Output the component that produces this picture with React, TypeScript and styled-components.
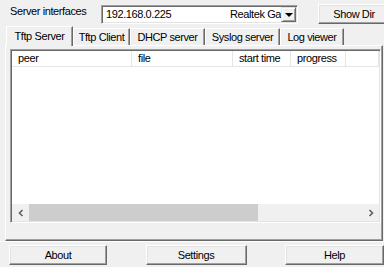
import React from "react";
import styled, { createGlobalStyle } from "styled-components";

const Global = createGlobalStyle`
  html, body { margin: 0; padding: 0; background: #f0f0f0; }
  body {
    font-family: "Liberation Sans", Arial, sans-serif;
    font-size: 11px;
    letter-spacing: -0.4px;
    color: #000;
  }
`;

const Window = styled.div`
  width: 384px;
  height: 267px;
  background: #f0f0f0;
  display: flex;
  flex-direction: column;
  overflow: hidden;
`;

const TopRow = styled.div`
  display: flex;
  align-items: center;
  height: 20px;
  margin-top: 4px;
  padding-left: 10px;
`;

const Label = styled.span`
  width: 91px;
  flex: none;
  white-space: nowrap;
  line-height: 13px;
  margin-top: -5px;
`;

const Combo = styled.div`
  width: 197px;
  height: 19px;
  flex: none;
  box-sizing: border-box;
  background: #fff;
  border-top: 1px solid #a0a0a0;
  border-left: 1px solid #a0a0a0;
  border-right: 1px solid #fff;
  border-bottom: 1px solid #fff;
  box-shadow: inset 1px 1px 0 #696969, inset -1px -1px 0 #e3e3e3;
  display: flex;
  align-items: center;
  padding: 0 1px 0 4px;
`;

const ComboText = styled.span`
  width: 124px;
  flex: none;
  white-space: nowrap;
`;

const ComboExtra = styled.span`
  flex: 1;
  overflow: hidden;
  white-space: nowrap;
`;

const DropButton = styled.div`
  width: 15px;
  height: 15px;
  flex: none;
  box-sizing: border-box;
  background: #f0f0f0;
  border-top: 1px solid #e3e3e3;
  border-left: 1px solid #e3e3e3;
  border-right: 1px solid #696969;
  border-bottom: 1px solid #696969;
  box-shadow: inset 1px 1px 0 #fff, inset -1px -1px 0 #a0a0a0;
  display: flex;
  align-items: center;
  justify-content: center;
`;

const Arrow = styled.div`
  width: 0;
  height: 0;
  border-left: 4px solid transparent;
  border-right: 4px solid transparent;
  border-top: 4px solid #000;
  margin-top: 1px;
`;

const Button = styled.div<{ $w: number }>`
  width: ${(p) => p.$w}px;
  height: 20px;
  box-sizing: border-box;
  flex: none;
  background: #f0f0f0;
  border-top: 1px solid #fff;
  border-left: 1px solid #fff;
  border-right: 1px solid #696969;
  border-bottom: 1px solid #696969;
  box-shadow: inset -1px -1px 0 #a0a0a0, inset 1px 1px 0 #e3e3e3;
  display: flex;
  align-items: center;
  justify-content: center;
  white-space: nowrap;
`;

const TopButton = styled(Button)`
  margin-left: 20px;
`;

const TabStrip = styled.div`
  display: flex;
  align-items: flex-end;
  margin-top: 2px;
  padding-left: 6px;
  height: 19px;
  position: relative;
  z-index: 1;
`;

const Tab = styled.div<{ $w: number; $active?: boolean }>`
  width: ${(p) => p.$w}px;
  height: ${(p) => (p.$active ? 20 : 17)}px;
  box-sizing: border-box;
  flex: none;
  background: #f0f0f0;
  border-top: 1px solid #fff;
  border-left: 1px solid #fff;
  border-right: 1px solid #696969;
  box-shadow: inset -1px 0 0 #a0a0a0;
  display: flex;
  align-items: center;
  justify-content: center;
  padding-bottom: ${(p) => (p.$active ? 2 : 0)}px;
  margin-bottom: ${(p) => (p.$active ? -1 : 0)}px;
  white-space: nowrap;
`;

const Panel = styled.div`
  margin: 0 1px 0 5px;
  height: 196px;
  flex: none;
  box-sizing: border-box;
  border-top: 1px solid #fff;
  border-left: 1px solid #fff;
  border-right: 1px solid #696969;
  border-bottom: 1px solid #696969;
  box-shadow: inset -1px -1px 0 #a0a0a0;
  padding: 3px 1px 0 4px;
`;

const List = styled.div`
  height: 174px;
  box-sizing: border-box;
  background: #fff;
  border-top: 1px solid #a0a0a0;
  border-left: 1px solid #a0a0a0;
  border-right: 1px solid #fff;
  border-bottom: 1px solid #fff;
  box-shadow: inset 1px 1px 0 #696969, inset -1px -1px 0 #e3e3e3;
  padding: 1px;
  display: flex;
  flex-direction: column;
`;

const Header = styled.div`
  display: flex;
  height: 15px;
  flex: none;
  border-bottom: 1px solid #e5e5e5;
`;

const HeaderCell = styled.div<{ $w?: number }>`
  ${(p) => (p.$w ? `width: ${p.$w}px; flex: none;` : "flex: 1;")}
  box-sizing: border-box;
  border-right: 1px solid #e5e5e5;
  padding-left: 6px;
  line-height: 15px;
  white-space: nowrap;
  overflow: hidden;
`;

const Body = styled.div`
  flex: 1;
`;

const HScroll = styled.div`
  height: 17px;
  flex: none;
  display: flex;
  align-items: stretch;
  background: #f0f0f0;
`;

const ScrollArrow = styled.div`
  width: 17px;
  flex: none;
  display: flex;
  align-items: center;
  justify-content: center;
`;

const Thumb = styled.div`
  width: 229px;
  flex: none;
  background: #cdcdcd;
`;

const Track = styled.div`
  flex: 1;
`;

const Separator = styled.div`
  height: 0;
  flex: none;
  border-top: 1px solid #fff;
`;

const BottomRow = styled.div`
  display: flex;
  justify-content: space-between;
  margin-top: 3px;
  padding-left: 9px;
`;

const Chevron = ({ dir }: { dir: "l" | "r" }) => (
  <svg width="8" height="8" viewBox="0 0 8 8">
    <path
      d={dir === "l" ? "M5.5 1 L2.5 4 L5.5 7" : "M2.5 1 L5.5 4 L2.5 7"}
      fill="none"
      stroke="#606060"
      strokeWidth="1.6"
    />
  </svg>
);

export default function App() {
  return (
    <>
      <Global />
      <Window>
        <TopRow>
          <Label>Server interfaces</Label>
          <Combo>
            <ComboText>192.168.0.225</ComboText>
            <ComboExtra>Realtek Gaming GbE Family Controller</ComboExtra>
            <DropButton>
              <Arrow />
            </DropButton>
          </Combo>
          <TopButton $w={72}>Show Dir</TopButton>
        </TopRow>
        <TabStrip>
          <Tab $w={67} $active>Tftp Server</Tab>
          <Tab $w={57}>Tftp Client</Tab>
          <Tab $w={75}>DHCP server</Tab>
          <Tab $w={75}>Syslog server</Tab>
          <Tab $w={64}>Log viewer</Tab>
        </TabStrip>
        <Panel>
          <List>
            <Header>
              <HeaderCell $w={120}>peer</HeaderCell>
              <HeaderCell $w={101}>file</HeaderCell>
              <HeaderCell $w={58}>start time</HeaderCell>
              <HeaderCell $w={55}>progress</HeaderCell>
              <HeaderCell />
            </Header>
            <Body />
            <HScroll>
              <ScrollArrow>
                <Chevron dir="l" />
              </ScrollArrow>
              <Thumb />
              <Track />
              <ScrollArrow>
                <Chevron dir="r" />
              </ScrollArrow>
            </HScroll>
          </List>
        </Panel>
        <Separator />
        <BottomRow>
          <Button $w={98}>About</Button>
          <Button $w={101}>Settings</Button>
          <Button $w={99}>Help</Button>
        </BottomRow>
      </Window>
    </>
  );
}
